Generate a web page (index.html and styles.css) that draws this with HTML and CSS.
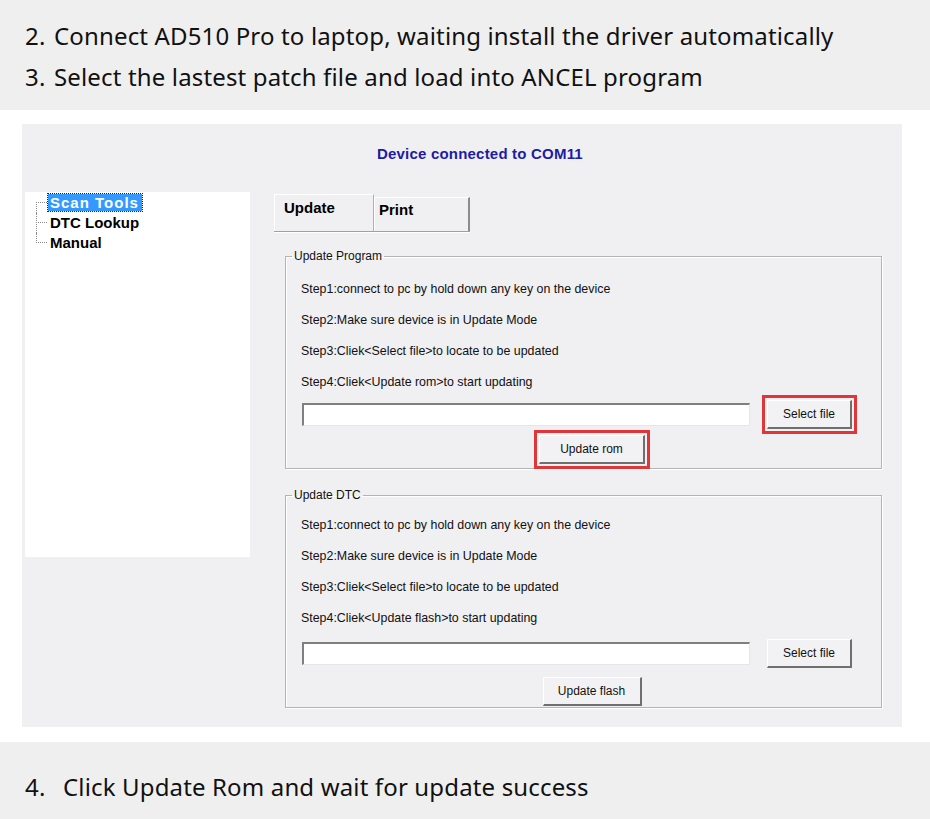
FILE: index.html
```html
<!DOCTYPE html>
<html lang="en">
<head>
  <meta charset="UTF-8">
  <title>AD510 Pro Update</title>
  <link rel="stylesheet" href="styles.css">
</head>
<body>
  <div class="intro">
    <p class="line"><span class="num">2.</span>Connect AD510 Pro to laptop, waiting install the driver automatically</p>
    <p class="line"><span class="num">3.</span>Select the lastest patch file and load into ANCEL program</p>
  </div>

  <div class="shot">
    <div class="status">Device connected to COM11</div>
    <div class="main">
      <ul class="tree">
        <li><span class="selected">Scan Tools</span></li>
        <li><span>DTC Lookup</span></li>
        <li><span>Manual</span></li>
      </ul>

      <div class="pane">
        <div class="tabs">
          <div class="tab active">Update</div>
          <div class="tab">Print</div>
        </div>

        <fieldset class="group">
          <legend>Update Program</legend>
          <div class="group-body">
            <div class="step">Step1:connect to pc by hold down any key on the device</div>
            <div class="step">Step2:Make sure device is in Update Mode</div>
            <div class="step">Step3:Cliek&lt;Select file&gt;to locate to be updated</div>
            <div class="step">Step4:Cliek&lt;Update rom&gt;to start updating</div>
            <div class="file-row">
              <input type="text" class="path">
              <button class="btn marked">Select file</button>
            </div>
            <div class="actions">
              <button class="btn wide marked">Update rom</button>
            </div>
          </div>
        </fieldset>

        <fieldset class="group dtc">
          <legend>Update DTC</legend>
          <div class="group-body">
            <div class="step">Step1:connect to pc by hold down any key on the device</div>
            <div class="step">Step2:Make sure device is in Update Mode</div>
            <div class="step">Step3:Cliek&lt;Select file&gt;to locate to be updated</div>
            <div class="step">Step4:Cliek&lt;Update flash&gt;to start updating</div>
            <div class="file-row">
              <input type="text" class="path">
              <button class="btn">Select file</button>
            </div>
            <div class="actions">
              <button class="btn wide">Update flash</button>
            </div>
          </div>
        </fieldset>
      </div>
    </div>
  </div>

  <div class="outro">
    <p class="line"><span class="num wide-num">4.</span>Click Update Rom and wait for update success</p>
  </div>
</body>
</html>
```

FILE: styles.css
```css
body {
  margin: 0;
  background: #fff;
  font-family: "Liberation Sans", Arial, sans-serif;
}
.intro {
  height: 110px;
  box-sizing: border-box;
  padding: 15px 0 0 25px;
  background: #efefef;
}
.line {
  margin: 0;
  font-family: "Noto Sans", sans-serif;
  font-size: 24px;
  line-height: 41px;
  letter-spacing: 0.15px;
  color: #111;
}
.num {
  display: inline-block;
  width: 29px;
}
.wide-num {
  width: 38px;
}

.shot {
  width: 880px;
  height: 603px;
  box-sizing: border-box;
  margin: 14px 0 15px 22px;
  padding-top: 22px;
  background: #f0eff2;
}
.status {
  padding-left: 355px;
  font-weight: bold;
  font-size: 15px;
  line-height: 16px;
  letter-spacing: 0.2px;
  color: #1c1ca4;
}
.main {
  display: flex;
  margin-top: 30px;
}

/* tree view */
.tree {
  list-style: none;
  width: 225px;
  height: 365px;
  box-sizing: border-box;
  margin: 0 0 0 3px;
  padding: 1px 0 0;
  background: #fff;
}
.tree li {
  position: relative;
  height: 20px;
  padding-left: 23px;
  font-weight: bold;
  font-size: 15px;
  line-height: 17px;
  color: #000;
}
.tree li::before {
  content: "";
  position: absolute;
  left: 11px;
  top: 9px;
  width: 11px;
  border-top: 1px dotted #8a8a8a;
}
.tree li::after {
  content: "";
  position: absolute;
  left: 11px;
  top: 0;
  bottom: 0;
  border-left: 1px dotted #8a8a8a;
}
.tree li:first-child::after {
  top: 9px;
}
.tree li:last-child::after {
  bottom: 10px;
}
.tree span {
  display: inline-block;
  padding: 0 2px;
  margin-top: 1px;
}
.tree .selected {
  padding-right: 3px;
  letter-spacing: 1px;
  background: #3399ff;
  color: #fff;
  outline: 1px dotted #222;
}

/* tabs + groups */
.pane {
  margin-left: 24px;
  margin-top: 2px;
}
.tabs {
  display: flex;
  align-items: flex-end;
  width: 196px;
  border-bottom: 1px solid #a0a0a0;
  box-shadow: 0 1px 0 #fff;
}
.tab {
  box-sizing: border-box;
  border-top: 1px solid #fff;
  border-left: 1px solid #fff;
  border-right: 2px solid #8c8c8c;
  font-weight: bold;
  font-size: 15px;
  line-height: 17px;
  color: #000;
}
.tab.active {
  width: 100px;
  height: 37px;
  padding: 4px 0 0 9px;
  border-right-color: #b0b0b0;
  border-right-width: 1px;
}
.tab:not(.active) {
  width: 96px;
  height: 34px;
  padding: 3px 0 0 4px;
}

.group {
  width: 597px;
  box-sizing: border-box;
  margin: 16px 0 0 11px;
  padding: 0;
  border: 1px solid #b4b4b4;
  box-shadow: 1px 1px 0 #fff, inset 1px 1px 0 #fff;
}
.group.dtc {
  margin-top: 18px;
}
.group legend {
  margin-left: 6px;
  padding: 0 2px;
  font-size: 12px;
  line-height: 16px;
  color: #111;
}
.group-body {
  height: 204px;
  box-sizing: border-box;
  padding: 10px 0 0 15px;
}
.dtc .group-body {
  padding-top: 7px;
}
.step {
  height: 31px;
  line-height: 31px;
  font-size: 12.4px;
  color: #111;
}
.file-row {
  display: flex;
  align-items: center;
  gap: 17px;
  height: 32px;
  margin-top: 0;
}
.dtc .file-row {
  margin-top: 3px;
}
.path {
  width: 448px;
  height: 23px;
  box-sizing: border-box;
  margin: 0 0 0 1px;
  padding: 0;
  background: #fff;
  border-top: 2px solid #7f7f7f;
  border-left: 2px solid #7f7f7f;
  border-right: 1px solid #e6e6e6;
  border-bottom: 1px solid #e6e6e6;
}
.btn {
  width: 85px;
  height: 29px;
  box-sizing: border-box;
  padding: 0;
  background: #f2f1f3;
  border-top: 1px solid #fff;
  border-left: 1px solid #fff;
  border-right: 2px solid #6f6f6f;
  border-bottom: 2px solid #6f6f6f;
  font-family: "Liberation Sans", Arial, sans-serif;
  font-size: 12px;
  color: #111;
}
.btn.wide {
  width: 106px;
}
.dtc .btn.wide {
  width: 99px;
}
.marked {
  outline: 3px solid #e0363a;
  outline-offset: 2px;
}
.actions {
  display: flex;
  justify-content: center;
  padding-left: 2px;
  margin-top: 5px;
}
.dtc .actions {
  margin-top: 8px;
}

.outro {
  height: 77px;
  box-sizing: border-box;
  padding: 24px 0 0 25px;
  background: #efefef;
}
```
